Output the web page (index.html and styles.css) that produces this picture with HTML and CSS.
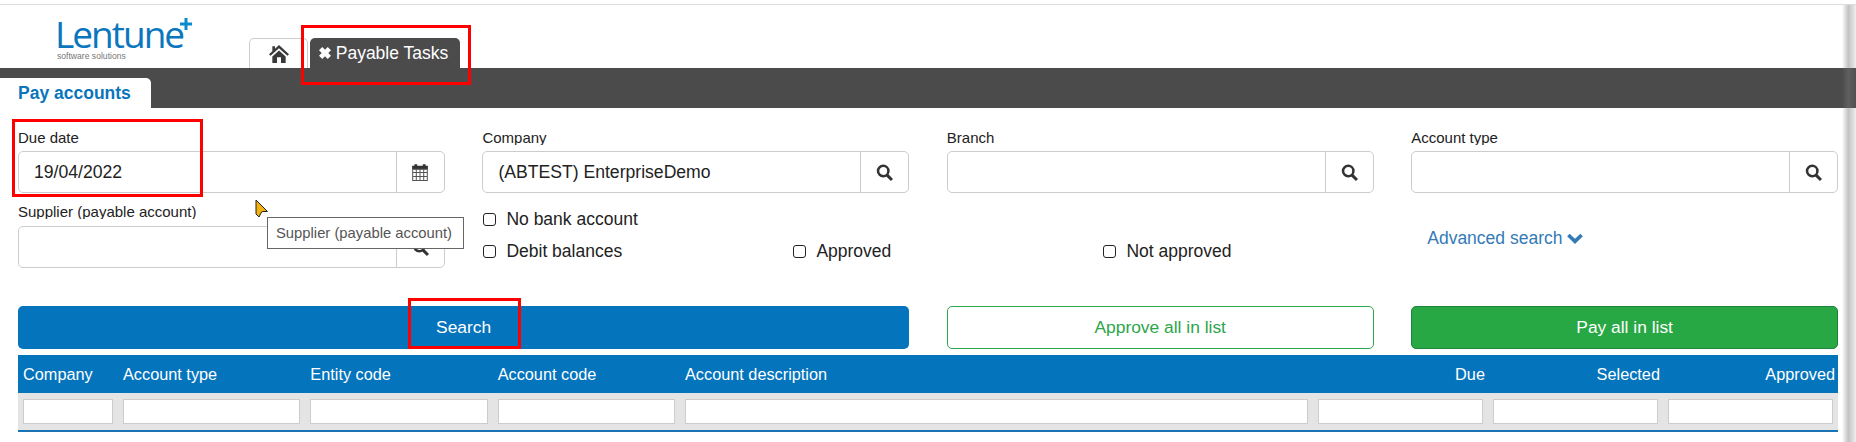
FILE: index.html
```html
<!DOCTYPE html>
<html lang="en">
<head>
  <meta charset="UTF-8" />
  <title>Lentune - Payable Tasks</title>
  <link rel="stylesheet" href="styles.css">
</head>
<body>

  <header>
    <div class="logo">
      <div class="logo-name">Lentune</div>
      <svg class="logo-plus" width="12" height="12" viewBox="0 0 12 12"><path fill="#0a8bc9" d="M4.5 0 H7.5 V4.5 H12 V7.5 H7.5 V12 H4.5 V7.5 H0 V4.5 H4.5 Z"/></svg>
      <div class="logo-sub">software solutions</div>
    </div>
    <div class="page-tabs">
      <a class="page-tab home-tab">
        <svg width="20" height="18" viewBox="0 0 18 16"><path fill="#3a3a3a" d="M9 0 L18 8.2 L16.6 9.6 L9 2.8 L1.4 9.6 L0 8.2 L3 5.5 V1 H5.4 V3.3 Z M3 10.2 L9 4.8 L15 10.2 V16 H10.8 V11 H7.2 V16 H3 Z"/></svg>
      </a>
      <a class="page-tab active-tab">
        <svg width="12" height="12" viewBox="0 0 11 11"><path fill="#fff" d="M3 0 L5.5 2.5 L8 0 L11 3 L8.5 5.5 L11 8 L8 11 L5.5 8.5 L3 11 L0 8 L2.5 5.5 L0 3 Z"/></svg>
        Payable Tasks
      </a>
    </div>
  </header>

  <div class="sub-bar">
    <a class="sub-tab">Pay accounts</a>
  </div>

  <section class="filters">
    <div class="field">
      <label>Due date</label>
      <div class="input-group">
        <input type="text" value="19/04/2022">
        <span class="addon">
          <svg width="18" height="18" viewBox="0 0 16 16">
            <path fill="#333" d="M1 2.5 H3 V1 H5.5 V2.5 H10.5 V1 H13 V2.5 H15 V5.5 H1 Z"/>
            <path fill="none" stroke="#555" stroke-width="0.9" d="M1.5 5.5 H14.5 V15.5 H1.5 Z M1.5 8.5 H14.5 M1.5 12 H14.5 M4.7 5.5 V15.5 M8 5.5 V15.5 M11.3 5.5 V15.5"/>
          </svg>
        </span>
      </div>
    </div>
    <div class="field">
      <label>Company</label>
      <div class="input-group">
        <input type="text" value="(ABTEST) EnterpriseDemo">
        <span class="addon">
          <svg width="17" height="17" viewBox="0 0 16 16"><circle cx="6.8" cy="6.6" r="4.9" fill="none" stroke="#333" stroke-width="2.4"/><path stroke="#333" stroke-width="2.8" d="M10.2 10.2 L15 15"/></svg>
        </span>
      </div>
    </div>
    <div class="field">
      <label>Branch</label>
      <div class="input-group">
        <input type="text">
        <span class="addon">
          <svg width="17" height="17" viewBox="0 0 16 16"><circle cx="6.8" cy="6.6" r="4.9" fill="none" stroke="#333" stroke-width="2.4"/><path stroke="#333" stroke-width="2.8" d="M10.2 10.2 L15 15"/></svg>
        </span>
      </div>
    </div>
    <div class="field">
      <label>Account type</label>
      <div class="input-group">
        <input type="text">
        <span class="addon">
          <svg width="17" height="17" viewBox="0 0 16 16"><circle cx="6.8" cy="6.6" r="4.9" fill="none" stroke="#333" stroke-width="2.4"/><path stroke="#333" stroke-width="2.8" d="M10.2 10.2 L15 15"/></svg>
        </span>
      </div>
    </div>

    <div class="field">
      <label>Supplier (payable account)</label>
      <div class="input-group">
        <input type="text">
        <span class="addon">
          <svg width="17" height="17" viewBox="0 0 16 16"><circle cx="6.8" cy="6.6" r="4.9" fill="none" stroke="#333" stroke-width="2.4"/><path stroke="#333" stroke-width="2.8" d="M10.2 10.2 L15 15"/></svg>
        </span>
      </div>
    </div>
    <div class="checks">
      <label class="check"><input type="checkbox"> No bank account</label>
      <span></span>
      <span></span>
      <label class="check"><input type="checkbox"> Debit balances</label>
      <label class="check"><input type="checkbox"> Approved</label>
      <label class="check"><input type="checkbox"> Not approved</label>
    </div>
    <div class="advanced">
      <a>Advanced search
        <svg width="16" height="11" viewBox="0 0 16 11"><path fill="none" stroke="#337ab7" stroke-width="3.6" d="M1.4 2 L8 8.4 L14.6 2"/></svg>
      </a>
    </div>
  </section>

  <section class="actions">
    <button class="btn btn-search">Search</button>
    <button class="btn btn-approve">Approve all in list</button>
    <button class="btn btn-pay">Pay all in list</button>
  </section>

  <table class="results">
    <colgroup>
      <col class="c-company"><col class="c-code"><col class="c-code"><col class="c-code">
      <col class="c-desc"><col class="c-num"><col class="c-num"><col class="c-num">
    </colgroup>
    <thead>
      <tr>
        <th>Company</th>
        <th>Account type</th>
        <th>Entity code</th>
        <th>Account code</th>
        <th>Account description</th>
        <th class="right">Due</th>
        <th class="right">Selected</th>
        <th class="right">Approved</th>
      </tr>
    </thead>
    <tbody>
      <tr>
        <td><input type="text"></td>
        <td><input type="text"></td>
        <td><input type="text"></td>
        <td><input type="text"></td>
        <td><input type="text"></td>
        <td><input type="text"></td>
        <td><input type="text"></td>
        <td><input type="text"></td>
      </tr>
    </tbody>
  </table>

  <!-- Hover tooltip and mouse pointer -->
  <div class="tooltip">Supplier (payable account)</div>
  <svg class="pointer" width="14" height="20" viewBox="0 0 14 20"><path fill="#f2b310" stroke="#222" d="M1 1 L12.5 12.5 L8 12.5 L6.5 13 L4 18 L1 15 Z"/></svg>

  <!-- Annotations drawn on the screenshot -->
  <div class="mark mark-tab"></div>
  <div class="mark mark-date"></div>
  <div class="mark mark-search"></div>

  <div class="page-edge"></div>

</body>
</html>
```

FILE: styles.css
```css
* { margin: 0; padding: 0; box-sizing: border-box; }

body {
  font-family: 'Liberation Sans', Arial, sans-serif;
  background: #fff;
  color: #222;
  width: 1856px;
  height: 442px;
  overflow: hidden;
  position: relative;
  font-size: 17.5px;
}

input {
  font-family: inherit;
  font-size: 17.6px;
  color: #222;
}

/* --- Header --- */
header {
  margin-top: 4px;
  border-top: 1px solid #ddd;
  height: 64px;
  display: flex;
  align-items: flex-end;
}

.logo {
  width: 192px;
  height: 100%;
  padding: 11px 0 0 55px;
  flex-shrink: 0;
  position: relative;
}

.logo-name {
  font-family: 'Open Sans', sans-serif;
  font-weight: 400;
  font-size: 37px;
  height: 35px;
  line-height: 35px;
  letter-spacing: -2px;
  color: #0a76bd;
  white-space: nowrap;
}

.logo-plus {
  position: absolute;
  left: 180px;
  top: 13px;
}

.logo-sub {
  font-size: 8.6px;
  line-height: 8px;
  margin: 1px 0 0 2px;
  color: #777;
  white-space: nowrap;
}

.page-tabs {
  display: flex;
  gap: 2px;
  margin-left: 57px;
}

.page-tab {
  height: 30px;
  display: flex;
  align-items: center;
  justify-content: center;
  border-radius: 5px 5px 0 0;
}

.home-tab {
  width: 59px;
  border: 1px solid #ccc;
  border-bottom: none;
}

.active-tab {
  width: 150px;
  gap: 5px;
  padding-right: 3px;
  background: #4b4b4b;
  color: #fff;
}

.sub-bar {
  background: #4b4b4b;
  height: 40px;
  padding-top: 10px;
}

.sub-tab {
  display: block;
  width: 151px;
  height: 30px;
  padding-left: 18px;
  line-height: 30px;
  background: #fff;
  color: #0a75bc;
  font-weight: bold;
  border-radius: 0 5px 0 0;
}

/* --- Filter form --- */
.filters {
  display: grid;
  grid-template-columns: repeat(4, 1fr);
  column-gap: 37.67px;
  row-gap: 12px;
  padding: 23px 18px 0;
}

.field > label {
  display: block;
  height: 14px;
  line-height: 14px;
  font-size: 15px;
  overflow: hidden;
  margin-bottom: 6px;
}

.field:nth-child(n+5) > label {
  margin-bottom: 7px;
}

.input-group {
  display: flex;
  height: 42px;
  border: 1px solid #ccc;
  border-radius: 5px;
}

.input-group input {
  flex: 1;
  min-width: 0;
  border: none;
  background: transparent;
  padding: 0 15px;
  outline: none;
}

.addon {
  width: 48px;
  border-left: 1px solid #ccc;
  display: flex;
  align-items: center;
  justify-content: center;
}

.checks {
  grid-column: span 2;
  display: grid;
  grid-template-columns: repeat(3, 310px);
  grid-auto-rows: 32px;
  margin-top: -2px;
  align-content: start;
}

.check {
  display: flex;
  align-items: center;
  gap: 10px;
  font-size: 17.5px;
}

.check input {
  appearance: none;
  width: 13px;
  height: 13px;
  margin-left: 1px;
  border: 1.5px solid #222;
  border-radius: 3px;
  background: #fff;
}

.advanced {
  padding: 23px 0 0 16px;
  color: #337ab7;
  font-size: 17.5px;
}

/* --- Action buttons --- */
.actions {
  display: grid;
  grid-template-columns: repeat(4, 1fr);
  column-gap: 37.67px;
  padding: 38px 18px 0;
}

.btn {
  height: 43px;
  font-family: inherit;
  font-size: 17.4px;
  border-radius: 5px;
  border: 1px solid transparent;
}

.btn-search {
  grid-column: span 2;
  background: #0474bd;
  color: #fff;
}

.btn-approve {
  background: #fff;
  border-color: #2ca64a;
  color: #2ca64a;
}

.btn-pay {
  background: #28a745;
  border-color: #1e8538;
  color: #fff;
}

/* --- Results table --- */
.results {
  margin: 6px 18px 0;
  width: 1820px;
  table-layout: fixed;
  border-collapse: collapse;
  border-bottom: 2px solid #1a73b5;
}

.c-company { width: 100px; }
.c-code { width: 187.33px; }
.c-desc { width: 633px; }
.c-num { width: 175px; }

.results th {
  background: #0474bd;
  color: #fff;
  height: 38px;
  font-size: 16.3px;
  font-weight: normal;
  text-align: left;
  padding: 0 5px;
}

.results th.right {
  text-align: right;
  padding-right: 3px;
}

.results td {
  background: #e4e4e4;
  height: 38px;
  padding: 0 5px;
}

.results td input {
  display: block;
  width: 100%;
  height: 25px;
  border: 1px solid #ccc;
  background: #fff;
}

/* --- Things lying over the page --- */
.tooltip {
  position: absolute;
  left: 267px;
  top: 217px;
  width: 197px;
  height: 32px;
  padding-left: 8px;
  line-height: 30px;
  font-size: 14.8px;
  white-space: nowrap;
  color: #555;
  background: #fff;
  border: 1px solid #666;
}

.pointer {
  position: absolute;
  left: 255px;
  top: 199px;
}

.mark {
  position: absolute;
  border: 3px solid #f00;
}

.mark-tab { left: 301px; top: 25px; width: 170px; height: 60px; }
.mark-date { left: 12px; top: 119px; width: 191px; height: 78px; }
.mark-search { left: 408px; top: 298px; width: 113px; height: 51px; }

.page-edge {
  position: absolute;
  right: 0;
  top: 5px;
  bottom: 0;
  width: 14px;
  background: linear-gradient(to right, rgba(120,120,120,0), rgba(120,120,120,0.45) 45%, rgba(120,120,120,0.12));
}
```
